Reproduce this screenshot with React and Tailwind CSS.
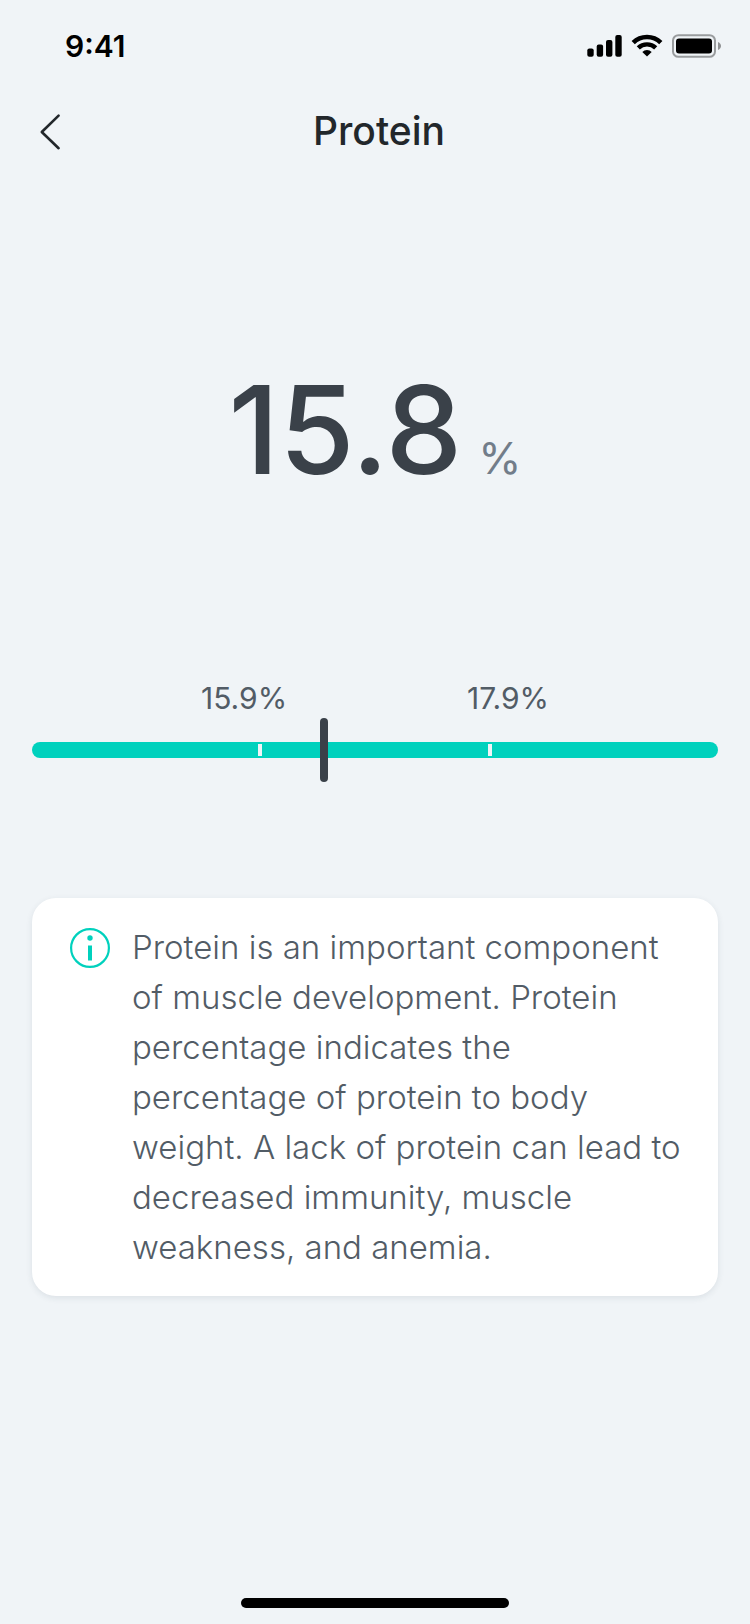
const levels = ["15.9%", "17.9%"];

function StatusBar() {
  return (
    <div className="flex h-22 items-center justify-between pl-[65px] pr-7 pt-1 text-black">
      <span className="text-[30px] font-semibold leading-9">9:41</span>
      <div className="flex items-center gap-2">
        <svg width="36" height="24" viewBox="0 0 36 24" fill="currentColor" aria-hidden="true">
          <rect x="0.3" y="14.6" width="6.4" height="8.2" rx="2" />
          <rect x="9.7" y="10.6" width="6.4" height="12.2" rx="2" />
          <rect x="19" y="6" width="6.4" height="16.8" rx="2" />
          <rect x="28.3" y="1" width="6.4" height="21.8" rx="2" />
        </svg>
        <svg width="32" height="24" viewBox="0 0 32 24" fill="none" stroke="currentColor" aria-hidden="true">
          <path d="M2.2 8.7 A19.6 19.6 0 0 1 29.8 8.7" strokeWidth="4.6" />
          <path d="M7.3 13.9 A12.4 12.4 0 0 1 24.7 13.9" strokeWidth="4.4" />
          <path d="M16 22.6 L11.3 18 A6.8 6.8 0 0 1 20.7 18 Z" fill="currentColor" stroke="none" />
        </svg>
        <svg width="51" height="24" viewBox="0 0 51 24" aria-hidden="true">
          <rect x="2" y="1.2" width="42" height="21.6" rx="5.4" fill="none" stroke="#000" strokeOpacity="0.36" strokeWidth="2" />
          <rect x="5" y="4.4" width="36" height="15.2" rx="3" fill="#000" />
          <path d="M47 8 C49 8.8 50 10.3 50 12 C50 13.7 49 15.2 47 16 Z" fill="#000" fillOpacity="0.4" />
        </svg>
      </div>
    </div>
  );
}

function Header({ title }) {
  return (
    <header className="grid h-22 grid-cols-[96px_1fr_88px] items-center">
      <button type="button" aria-label="Back" className="flex h-full items-center pl-9 text-[#22272b]">
        <svg width="28" height="40" viewBox="0 0 28 40" fill="none" stroke="currentColor" strokeWidth="2.6" strokeLinecap="round" strokeLinejoin="round">
          <path d="M22.6 3.6 L5.8 20 L22.6 36.2" />
        </svg>
      </button>
      <h1 className="pb-[2px] text-center text-[39px] font-medium leading-12 text-[#22272b]">{title}</h1>
    </header>
  );
}

function Gauge({ position }) {
  return (
    <section className="px-8">
      <div className="flex justify-center gap-45 text-[30px] leading-10 text-[#525c66]">
        {levels.map((level) => (
          <span key={level}>{level}</span>
        ))}
      </div>
      <div className="relative mt-6 grid h-4 grid-cols-[114fr_115fr_114fr] rounded-full bg-[#00d1bd] py-[2px]">
        <span className="-mr-[2px] border-r-4 border-[#f0f4f7]" />
        <span className="-mr-[2px] border-r-4 border-[#f0f4f7]" />
        <span
          className="absolute -top-6 h-16 w-2 -translate-x-1/2 rounded-full bg-[#3a4149]"
          style={{ left: `${position}%` }}
        />
      </div>
    </section>
  );
}

function InfoCard({ children }) {
  return (
    <section className="mx-8 flex items-start rounded-3xl bg-white py-6 pl-9 pr-7 shadow-[0_2px_6px_rgba(40,60,80,0.1)]">
      <svg className="mr-5 mt-1 shrink-0" width="44" height="44" viewBox="0 0 44 44" fill="none" aria-hidden="true">
        <circle cx="22" cy="22" r="18.9" stroke="#00d1bd" strokeWidth="2.2" />
        <circle cx="22" cy="12" r="2.7" fill="#00d1bd" />
        <rect x="20" y="19.5" width="4" height="15" fill="#00d1bd" />
      </svg>
      <p className="text-[33px] font-light leading-[50px] text-[#525c66]">{children}</p>
    </section>
  );
}

export default function App() {
  return (
    <div className="flex min-h-screen flex-col bg-[#f0f4f7] font-['Inter',sans-serif]">
      <StatusBar />
      <Header title="Protein" />
      <main className="flex-1">
        <div className="flex items-baseline justify-center gap-4 pb-35 pt-[174px] leading-40">
          <span className="text-[122px] font-medium text-[#3a4149]">15.8</span>
          <span className="text-[44px] text-[#727d8a]">%</span>
        </div>
        <Gauge position={42.6} />
        <div className="pt-35">
          <InfoCard>
            Protein is an important component of muscle development. Protein percentage indicates the
            percentage of protein to body weight. A lack of protein can lead to decreased immunity, muscle
            weakness, and anemia.
          </InfoCard>
        </div>
      </main>
      <footer className="flex justify-center pb-4">
        <div className="h-[10px] w-67 rounded-full bg-black" />
      </footer>
    </div>
  );
}
